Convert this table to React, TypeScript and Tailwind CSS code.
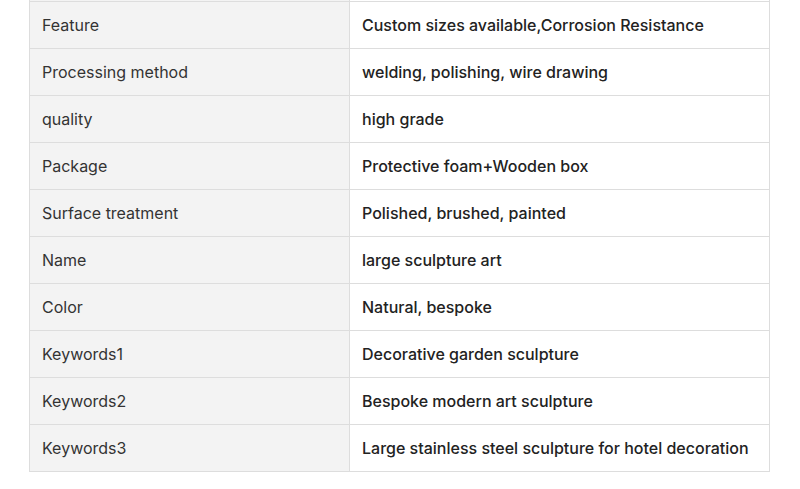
import React from 'react';

const rows: [string, string][] = [
  ['Feature', 'Custom sizes available,Corrosion Resistance'],
  ['Processing method', 'welding, polishing, wire drawing'],
  ['quality', 'high grade'],
  ['Package', 'Protective foam+Wooden box'],
  ['Surface treatment', 'Polished, brushed, painted'],
  ['Name', 'large sculpture art'],
  ['Color', 'Natural, bespoke'],
  ['Keywords1', 'Decorative garden sculpture'],
  ['Keywords2', 'Bespoke modern art sculpture'],
  ['Keywords3', 'Large stainless steel sculpture for hotel decoration'],
];

export default function App() {
  return (
    <div className="w-[800px] h-[489px] bg-white font-['Inter',sans-serif] overflow-hidden">
      <div className="ml-[29px] w-[741px] border-x border-b border-[#dddddd]">
        {/* tail of the row above */}
        <div className="flex h-px">
          <div className="w-[320px] bg-[#f3f3f3] border-r border-[#dddddd]" />
          <div className="flex-1" />
        </div>
        {rows.map(([label, value]) => (
          <div key={label} className="flex h-[47px] border-t border-[#dddddd]">
            <div className="w-[320px] shrink-0 bg-[#f3f3f3] border-r border-[#dddddd] px-3 flex items-center text-[16px] text-[#333333]">
              {label}
            </div>
            <div className="flex-1 px-3 flex items-center text-[16px] font-medium text-[#222222]">
              {value}
            </div>
          </div>
        ))}
      </div>
    </div>
  );
}
